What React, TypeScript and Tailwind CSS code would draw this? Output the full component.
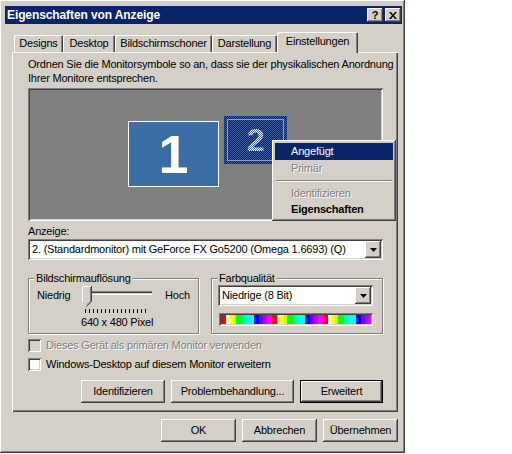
import React from 'react'

// classic 3D bevels
const raised =
  'shadow-[inset_-1px_-1px_0_#404040,inset_1px_1px_0_#ffffff,inset_-2px_-2px_0_#808080,inset_2px_2px_0_#d4d0c8]'
const sunken =
  'shadow-[inset_1px_1px_0_#808080,inset_-1px_-1px_0_#ffffff,inset_2px_2px_0_#404040,inset_-2px_-2px_0_#d4d0c8]'
const disabled = 'text-[#808080] [text-shadow:1px_1px_0_#ffffff]'
const etched = 'border border-[#808080] shadow-[1px_1px_0_#ffffff,inset_1px_1px_0_#ffffff]'

const tabs = [
  { label: 'Designs', w: 'w-[49px]' },
  { label: 'Desktop', w: 'w-[52px]' },
  { label: 'Bildschirmschoner', w: 'w-[97px]' },
  { label: 'Darstellung', w: 'w-[65px]' },
]

const palette: Array<[string, number]> = [
  ['#ff0000', 5],
  ['#ffffd0', 3],
  ['#ffff00', 4],
  ['#c0ff00', 3],
  ['#00ff00', 6],
  ['#00ffa0', 4],
  ['#00ffff', 8],
  ['#0000ff', 5],
  ['#8000ff', 4],
  ['#c000ff', 4],
  ['#ff00ff', 5],
]

function DropArrow() {
  return (
    <span className={`w-[16px] h-[17px] shrink-0 bg-[#d4d0c8] flex items-center justify-center ${raised}`}>
      <svg width="7" height="4" viewBox="0 0 7 4">
        <path d="M0 0h7L3.5 4z" fill="#000" />
      </svg>
    </span>
  )
}

function Select({ value, className }: { value: string; className: string }) {
  return (
    <div className={`flex items-center h-[21px] bg-white p-[2px] ${sunken} ${className}`}>
      <span className="flex-1 pl-[2px] whitespace-nowrap overflow-hidden">{value}</span>
      <DropArrow />
    </div>
  )
}

function Button({ label, className, isDefault }: { label: string; className: string; isDefault?: boolean }) {
  if (isDefault) {
    return (
      <div className={`h-[23px] border border-black ${className}`}>
        <div className={`h-full flex items-center justify-center bg-[#d4d0c8] ${raised}`}>{label}</div>
      </div>
    )
  }
  return <div className={`h-[23px] flex items-center justify-center bg-[#d4d0c8] ${raised} ${className}`}>{label}</div>
}

function Checkbox({ label, off }: { label: string; off?: boolean }) {
  return (
    <div className="flex items-center h-[13px]">
      <span className={`w-[13px] h-[13px] ${off ? 'bg-[#d4d0c8]' : 'bg-white'} ${sunken}`} />
      <span className={`ml-[5px] ${off ? disabled : ''}`}>{label}</span>
    </div>
  )
}

function Slider() {
  const ticks = []
  for (let x = 4; x <= 66; x += 4) ticks.push(x)
  return (
    <svg width="75" height="28" viewBox="0 0 75 28" className="block">
      <rect x="3" y="5" width="68" height="1" fill="#808080" />
      <rect x="3" y="6" width="68" height="1" fill="#404040" />
      <rect x="3" y="8" width="68" height="1" fill="#ffffff" />
      <polygon points="1,0 10,0 10,15 5.5,20 1,15" fill="#d4d0c8" />
      <polyline points="1.5,15 1.5,0.5 9.5,0.5" fill="none" stroke="#ffffff" />
      <polyline points="10.5,0 10.5,15.5 5.5,20.5" fill="none" stroke="#404040" />
      <polyline points="9.5,1 9.5,15 5.5,19" fill="none" stroke="#808080" />
      {ticks.map((x) => (
        <rect key={x} x={x} y="23" width="1" height="4" fill="#000" />
      ))}
    </svg>
  )
}

function ColorBar() {
  const rects: React.ReactNode[] = []
  let x = 0
  for (let r = 0; r < 3; r++) {
    for (const [c, w] of palette) {
      rects.push(<rect key={`${r}-${x}`} x={x} y="0" width={w} height="9" fill={c} />)
      x += w
    }
  }
  return (
    <div className={`w-[154px] h-[13px] p-[2px] ${sunken}`}>
      <svg width="150" height="9" viewBox="0 0 150 9" preserveAspectRatio="none" className="block">
        {rects}
      </svg>
    </div>
  )
}

function MonitorTwo() {
  return (
    <svg width="63" height="48" viewBox="0 0 63 48" className="block">
      <defs>
        <pattern id="dither" width="2" height="2" patternUnits="userSpaceOnUse">
          <rect width="2" height="2" fill="#0a246a" />
          <rect width="1" height="1" fill="#3a5a9a" />
          <rect x="1" y="1" width="1" height="1" fill="#3a5a9a" />
        </pattern>
        <pattern id="ditherText" width="2" height="2" patternUnits="userSpaceOnUse">
          <rect width="2" height="2" fill="#ffffff" />
          <rect width="1" height="1" fill="#5a6ea0" />
          <rect x="1" y="1" width="1" height="1" fill="#5a6ea0" />
        </pattern>
      </defs>
      <rect width="63" height="48" fill="url(#dither)" />
      <rect x="3.5" y="3.5" width="56" height="41" fill="none" stroke="#ffffff" strokeDasharray="1 1" />
      <text
        x="31.5"
        y="35"
        textAnchor="middle"
        fontFamily="Liberation Sans, Arial, sans-serif"
        fontWeight="bold"
        fontSize="32"
        fill="url(#ditherText)"
      >
        2
      </text>
    </svg>
  )
}

function ContextMenu() {
  return (
    <div className={`absolute left-[244px] top-[52px] w-[124px] h-[81px] bg-[#d4d0c8] p-[3px] ${raised}`}>
      <div className="h-[17px] flex items-center pl-[16px] bg-[#0a246a] text-white">Angefügt</div>
      <div className={`h-[17px] flex items-center pl-[16px] ${disabled}`}>Primär</div>
      <div className="h-[8px] flex items-center px-[1px]">
        <div className="w-full h-[2px] border-t border-[#808080] border-b border-b-white" />
      </div>
      <div className={`h-[16px] flex items-center pl-[16px] ${disabled}`}>Identifizieren</div>
      <div className="h-[17px] flex items-center pl-[16px] font-bold">Eigenschaften</div>
    </div>
  )
}

export default function App() {
  return (
    <div className="w-[512px] h-[454px] bg-white font-['Liberation_Sans',Arial,sans-serif] text-[11px] leading-[13px] tracking-[-0.2px] text-black">
      <div className={`w-[405px] h-[453px] bg-[#d4d0c8] pt-[6px] px-[5px] ${raised}`}>
        {/* title bar */}
        <div className="h-[18px] w-[397px] bg-[#0a246a] flex items-center pl-[2px] pr-[1px]">
          <span className="flex-1 text-white font-bold text-[12px] tracking-[-0.1px]">Eigenschaften von Anzeige</span>
          <span className={`w-[16px] h-[14px] bg-[#d4d0c8] flex items-center justify-center font-bold text-[11px] ${raised}`}>
            ?
          </span>
          <span className={`ml-[2px] w-[16px] h-[14px] bg-[#d4d0c8] flex items-center justify-center ${raised}`}>
            <svg width="8" height="7" viewBox="0 0 8 7">
              <path d="M0 0h2l2 2.5L6 0h2L5 3.5 8 7H6L4 4.5 2 7H0l3-3.5z" fill="#000" />
            </svg>
          </span>
        </div>

        <div className="pl-[7px] pt-[8px]">
          {/* tabs */}
          <div className="flex items-end h-[20px] pl-[2px]">
            {tabs.map((t) => (
              <div
                key={t.label}
                className={`h-[17px] ${t.w} flex items-center justify-center rounded-t-[2px] shadow-[inset_1px_1px_0_#ffffff,inset_-1px_0_0_#404040,inset_-2px_0_0_#808080]`}
              >
                {t.label}
              </div>
            ))}
            <div className="relative z-10 -mb-[1px] h-[21px] w-[81px] bg-[#d4d0c8] flex items-center justify-center pb-[2px] rounded-t-[2px] shadow-[inset_1px_1px_0_#ffffff,inset_-1px_0_0_#404040,inset_-2px_0_0_#808080]">
              Einstellungen
            </div>
          </div>

          {/* panel */}
          <div className="w-[386px] h-[360px] pl-[16px] pt-[5px] shadow-[inset_1px_1px_0_#ffffff,inset_-1px_-1px_0_#404040,inset_-2px_-2px_0_#808080]">
            <p className="leading-[14px] whitespace-nowrap">
              Ordnen Sie die Monitorsymbole so an, dass sie der physikalischen Anordnung
              <br />
              Ihrer Monitore entsprechen.
            </p>

            <div className={`relative mt-[3px] w-[355px] h-[133px] bg-[#808080] ${sunken}`}>
              <div className="absolute left-[100px] top-[33px] w-[91px] h-[66px] bg-[#3a6ea5] border border-white flex items-center justify-center text-white font-bold text-[54px] leading-none">
                1
              </div>
              <div className="absolute left-[196px] top-[28px]">
                <MonitorTwo />
              </div>
              <ContextMenu />
            </div>

            <div className="mt-[4px]">Anzeige:</div>
            <Select
              className="mt-[1px] w-[355px]"
              value="2. (Standardmonitor) mit GeForce FX Go5200 (Omega 1.6693) (Q)"
            />

            <div className="flex gap-[12px] mt-[12px] w-[355px]">
              <fieldset className={`w-[171px] h-[62px] ${etched}`}>
                <legend className="ml-[5px] px-[2px] bg-[#d4d0c8]">Bildschirmauflösung</legend>
                <div className="pl-[8px]">
                  <div className="flex items-start mt-[1px]">
                    <span className="w-[44px] mt-[3px]">Niedrig</span>
                    <Slider />
                    <span className="ml-[9px] mt-[3px]">Hoch</span>
                  </div>
                  <div className="ml-[44px] mt-[2px]">640 x 480 Pixel</div>
                </div>
              </fieldset>
              <fieldset className={`w-[172px] h-[62px] ${etched}`}>
                <legend className="ml-[5px] px-[2px] bg-[#d4d0c8]">Farbqualität</legend>
                <div className="pl-[6px]">
                  <Select className="w-[155px]" value="Niedrige (8 Bit)" />
                  <div className="mt-[7px] ml-[1px]">
                    <ColorBar />
                  </div>
                </div>
              </fieldset>
            </div>

            <div className="mt-[5px] flex flex-col gap-[6px]">
              <Checkbox off label="Dieses Gerät als primären Monitor verwenden" />
              <Checkbox label="Windows-Desktop auf diesem Monitor erweitern" />
            </div>

            <div className="mt-[9px] w-[355px] flex justify-end gap-[6px]">
              <Button label="Identifizieren" className="w-[84px]" />
              <Button label="Problembehandlung..." className="w-[123px]" />
              <Button label="Erweitert" className="w-[83px]" isDefault />
            </div>
          </div>
        </div>

        {/* dialog buttons */}
        <div className="mt-[7px] flex gap-[6px] pl-[156px]">
          <Button label="OK" className="w-[75px]" />
          <Button label="Abbrechen" className="w-[75px]" />
          <Button label="Übernehmen" className="w-[75px]" />
        </div>
      </div>
    </div>
  )
}
